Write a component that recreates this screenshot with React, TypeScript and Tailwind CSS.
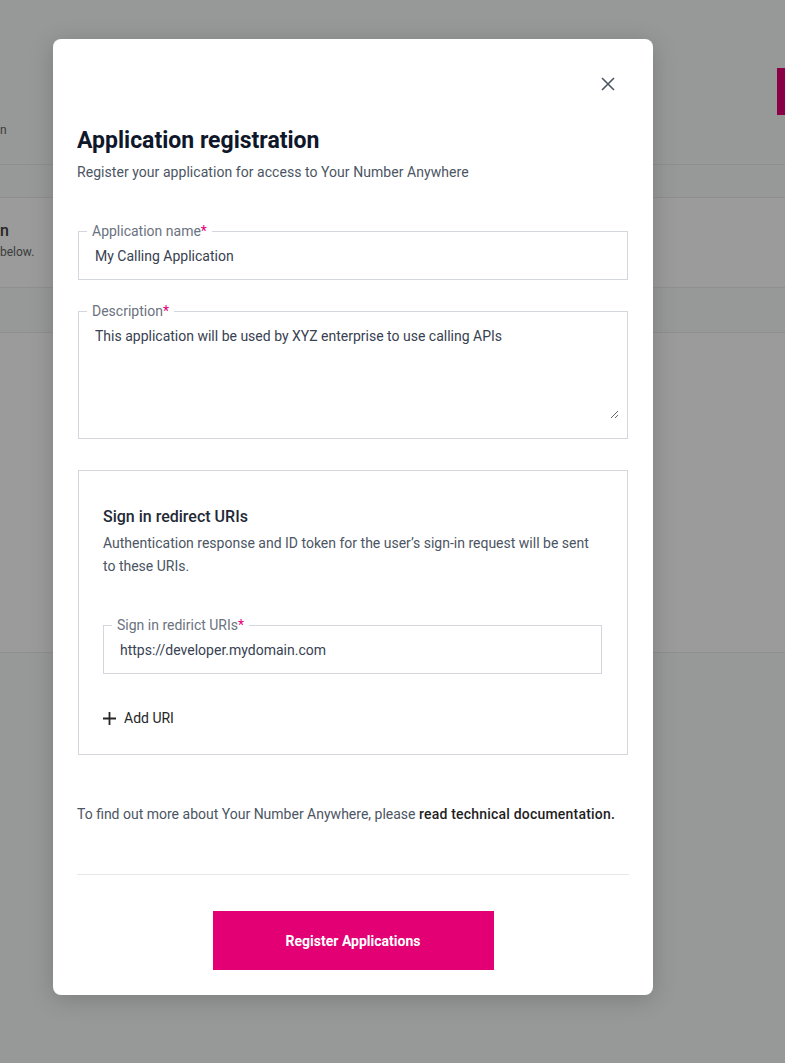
import React from "react";

const font = { fontFamily: "Roboto, 'Noto Sans', Arial, sans-serif" };

function Field({
  label,
  value,
  multiline = false,
}: {
  label: string;
  value: string;
  multiline?: boolean;
}) {
  return (
    <fieldset className="border border-[#d3d6dd] px-2 pb-[6px] min-w-0">
      <legend className="px-[5px] text-sm leading-4 text-[#6b7280]">
        {label}
        <span className="text-[#e20074]">*</span>
      </legend>
      {multiline ? (
        <div className="pb-[13px]">
          <textarea
            defaultValue={value}
            className="block w-full h-[100px] pt-[7px] px-2 text-sm leading-5 text-[#374151] outline-none"
          />
        </div>
      ) : (
        <input
          defaultValue={value}
          className="block w-full h-[34px] px-2 text-sm text-[#374151] outline-none"
        />
      )}
    </fieldset>
  );
}

function Backdrop() {
  // page behind the dialog, already dimmed by the overlay
  return (
    <div className="min-h-[1063px] bg-[#979898] flex flex-col overflow-hidden">
      <div className="h-[165px] flex justify-between border-b border-[#8e8f8f]">
        <span className="pt-[122px] text-xs leading-4 text-[#3a3b3b]">n</span>
        <div className="w-[8px] h-[47px] mt-[68px] bg-[#8a0047]" />
      </div>
      <div className="h-[33px] border-b border-[#8e8f8f]" />
      <div className="h-[90px] bg-[#9b9b9b] border-b border-[#8e8f8f] flex flex-col items-start pt-[23px]">
        <span className="text-base font-medium leading-5 text-[#262626]">n</span>
        <span className="text-xs leading-5 mt-[1px] text-[#3a3b3b]">below.</span>
      </div>
      <div className="h-[45px] border-b border-[#8e8f8f]" />
      <div className="h-[320px] bg-[#9b9b9b] border-b border-[#8e8f8f]" />
      <div className="flex-1" />
    </div>
  );
}

export default function App() {
  return (
    <div className="relative min-h-[1063px]" style={font}>
      <Backdrop />

      <div className="absolute left-[53px] top-[39px] w-[600px] bg-white rounded-lg shadow-[0_4px_24px_rgba(0,0,0,0.18)] pl-6 pr-6 pt-[31px] pb-[25px]">
        <div className="flex justify-end">
          <button className="w-7 h-7 mr-[7px] flex items-center justify-center text-[#4b5563]">
            <svg width="16" height="16" viewBox="0 0 16 16" fill="none">
              <path
                d="M2 2L14 14M14 2L2 14"
                stroke="currentColor"
                strokeWidth="1.6"
              />
            </svg>
          </button>
        </div>

        <h1 className="mt-[29px] text-[23px] leading-7 font-bold text-[#0f172a]">
          Application registration
        </h1>
        <p className="mt-[7px] text-sm leading-5 tracking-[0.05px] text-[#4b5563]">
          Register your application for access to Your Number Anywhere
        </p>

        <div className="mt-[41px] flex flex-col mx-px">
          <Field label="Application name" value="My Calling Application" />
          <div className="mt-[23px]">
            <Field
              label="Description"
              value="This application will be used by XYZ enterprise to use calling APIs"
              multiline
            />
          </div>

          <div className="mt-[31px] border border-[#d3d6dd] pt-[36px] pl-6 pr-[25px] pb-[26px]">
            <h2 className="text-base leading-5 font-medium text-[#1f2937]">
              Sign in redirect URIs
            </h2>
            <p className="mt-[5px] text-sm leading-[23px] text-[#4b5563]">
              Authentication response and ID token for the user’s sign-in
              request will be sent to these URIs.
            </p>
            <div className="mt-[39px]">
              <Field
                label="Sign in redirict URIs"
                value="https://developer.mydomain.com"
              />
            </div>
            <button className="mt-[34px] flex items-center gap-2 text-sm leading-5 text-[#262626]">
              <svg width="13" height="13" viewBox="0 0 13 13" fill="none">
                <path d="M6.5 0V13M0 6.5H13" stroke="currentColor" strokeWidth="1.8" />
              </svg>
              Add URI
            </button>
          </div>
        </div>

        <p className="mt-[49px] text-sm leading-5 text-[#4b5563]">
          To find out more about Your Number Anywhere, please{" "}
          <a className="font-medium tracking-[0.2px] text-[#1f1f1f]">
            read technical documentation.
          </a>
        </p>

        <div className="mt-[50px] border-t border-[#e5e7eb]" />

        <div className="mt-[36px] flex justify-center">
          <button className="w-[281px] h-[59px] bg-[#e20074] text-white text-sm font-bold">
            Register Applications
          </button>
        </div>
      </div>
    </div>
  );
}
